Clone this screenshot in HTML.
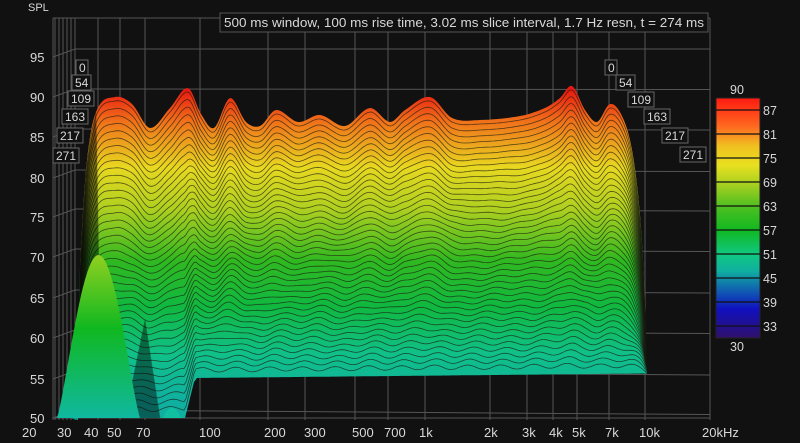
<!DOCTYPE html>
<html><head><meta charset="utf-8"><style>
html,body{margin:0;padding:0;background:#111112;width:800px;height:443px;overflow:hidden}
svg{display:block}
text{font-family:"Liberation Sans",sans-serif;fill:#d8d8d8}
</style></head><body>
<svg id="s" width="800" height="443" viewBox="0 0 800 443" xmlns="http://www.w3.org/2000/svg">
<defs>
<linearGradient id="g" gradientUnits="userSpaceOnUse" x1="0" y1="90" x2="0" y2="400">
<stop offset="0" stop-color="#e81a10"/>
<stop offset="0.1" stop-color="#f0701a"/>
<stop offset="0.25" stop-color="#e8d820"/>
<stop offset="0.38" stop-color="#b0d020"/>
<stop offset="0.55" stop-color="#30b820"/>
<stop offset="0.7" stop-color="#10b840"/>
<stop offset="0.85" stop-color="#10c088"/>
<stop offset="1" stop-color="#10b0a0"/>
</linearGradient>
<linearGradient id="hg" gradientUnits="userSpaceOnUse" x1="0" y1="255" x2="0" y2="418">
<stop offset="0" stop-color="#90d020"/><stop offset="0.45" stop-color="#10b820"/><stop offset="1" stop-color="#10b8a0"/>
</linearGradient>
<linearGradient id="cb" x1="0" y1="98" x2="0" y2="338" gradientUnits="userSpaceOnUse">
<stop offset="0" stop-color="#ff1a10"/><stop offset="0.12" stop-color="#ff6a20"/>
<stop offset="0.2" stop-color="#f0c020"/><stop offset="0.28" stop-color="#e8e020"/>
<stop offset="0.36" stop-color="#a8d020"/><stop offset="0.45" stop-color="#50c020"/>
<stop offset="0.55" stop-color="#10b820"/><stop offset="0.65" stop-color="#10c880"/>
<stop offset="0.72" stop-color="#10b0a0"/><stop offset="0.8" stop-color="#1060b0"/>
<stop offset="0.88" stop-color="#1010c0"/><stop offset="1" stop-color="#30106a"/>
</linearGradient>
<clipPath id="cp"><path id="cpp"/></clipPath>
</defs>
<g id="grid" stroke="#555" stroke-width="1" fill="none"></g>
<rect x="220" y="13" width="488" height="19" fill="#111112" stroke="#555"/>
<text x="224" y="27" font-size="12.5" textLength="480" lengthAdjust="spacingAndGlyphs">500 ms window, 100 ms rise time, 3.02 ms slice interval, 1.7 Hz resn, t = 274 ms</text>
<text x="28" y="11" font-size="11">SPL</text>
<g id="surf"></g>
<g id="labels" font-size="12"></g>
<rect x="716" y="98" width="44" height="240" fill="url(#cb)" stroke="#222"/>
<g stroke="#111" stroke-width="1.2" id="cbl"></g>
<g font-size="12.5" id="cbt"></g>
</svg>
<script>
(function(){
const NS="http://www.w3.org/2000/svg";
function el(t,a,p,txt){const e=document.createElementNS(NS,t);for(const k in a)e.setAttribute(k,a[k]);if(txt!==undefined)e.textContent=txt;(p||document.getElementById('s')).appendChild(e);return e;}
const grid=document.getElementById('grid');
const xs=[[28,"20"],[63,"30"],[90,"40"],[113,"50"],[142,"70"],[205,"100"],[270,"200"],[310,"300"],[358,"500"],[390,"700"],[425,"1k"],[490,"2k"],[528,"3k"],[555,"4k"],[578,"5k"],[611,"7k"],[645,"10k"],[708,"20kHz"]];
const gx=[53,98,120,145,200,268,305,355,388,425,490,527,553,577,609,645,710];
gx.forEach(x=>el('line',{x1:x,y1:18,x2:x,y2:420},grid));
[57,97,137,178,217,257,298,338,379,418].forEach((y,i)=>{el('line',{x1:53,y1:y,x2:75,y2:y-8},grid);el('line',{x1:75,y1:y-8,x2:710,y2:y-8+i*0.5},grid);});
el('line',{x1:53,y1:18,x2:710,y2:18},grid);
for(let i=0;i<6;i++)el('line',{x1:55+i*4,y1:18,x2:55+i*4,y2:420},grid);
el('line',{x1:53,y1:418,x2:710,y2:418},grid);
const L=document.getElementById('labels');
[[95,57],[90,97],[85,137],[80,178],[75,217],[70,257],[65,298],[60,338],[55,379],[50,418]].forEach(a=>el('text',{x:30,y:a[1]+5,"font-size":13},L,String(a[0])));
xs.forEach(a=>el('text',{x:a[0]-6,y:437,"font-size":13},L,a[1]));
function tag(x,y,t){el('rect',{x:x,y:y,width:t.length*7+5,height:15,fill:"#111",stroke:"#666"},L);el('text',{x:x+3,y:y+12},L,t);}
[[76,60,"0"],[72,75,"54"],[68,91,"109"],[62,109,"163"],[57,128,"217"],[53,148,"271"]].forEach(a=>tag(a[0],a[1],a[2]));
[[605,60,"0"],[616,75,"54"],[628,92,"109"],[644,109,"163"],[662,128,"217"],[680,147,"271"]].forEach(a=>tag(a[0],a[1],a[2]));
const pts=[[78,300],[86,170],[96,112],[115,97],[132,104],[150,128],[170,108],[188,88],[201,114],[214,128],[230,98],[246,122],[260,126],[276,110],[298,122],[320,115],[345,126],[370,108],[390,122],[405,110],[430,97],[452,118],[480,120],[520,116],[545,108],[560,98],[572,86],[585,110],[597,122],[610,104],[622,116],[632,150],[640,215],[645,300],[647,372]];
function topY(x){if(x<=pts[0][0])return 420;const n=pts.length;for(let i=1;i<n;i++){if(x<=pts[i][0]){const a=pts[i-1],b=pts[i];const p0=pts[Math.max(i-2,0)],p3=pts[Math.min(i+1,n-1)];const h=b[0]-a[0];const t=(x-a[0])/h;const m0=(b[1]-p0[1])/(b[0]-p0[0])*h,m1=(p3[1]-a[1])/(p3[0]-a[0])*h;const t2=t*t,t3=t2*t;return (2*t3-3*t2+1)*a[1]+(t3-2*t2+t)*m0+(-2*t3+3*t2)*b[1]+(t3-t2)*m1;}}return 372;}
function bot(x){return x<185?418:(x<195?418-(x-185)*4:378-(x-195)*0.01);}
let d="M56,418 L70,418 ";for(let x=78;x<=647;x+=2)d+="L"+x+","+topY(x).toFixed(1)+" ";
for(let x=647;x>=56;x-=3)d+="L"+x+","+bot(x).toFixed(1)+" ";d+="Z";
document.getElementById('cpp').setAttribute('d',d);
const S=document.getElementById('surf');
el('path',{d:d,fill:"url(#g)"},S);
const cg=el('g',{"clip-path":"url(#cp)",fill:"none",stroke:"#1a1a10","stroke-width":0.8,"stroke-opacity":0.7},S);
for(let k=0;k<42;k++){const f=k/42;let p="";for(let x=60;x<=650;x+=2){let ty=topY(x);if(ty>=400)ty=250;const b=bot(x);const w=Math.sin(x*0.07+k*0.25)*4*(1-f)+Math.sin(x*0.19+k*0.4)*1.5;const y=ty+(b-6-ty)*f+w*f*1.5+4;p+=(x==60?"M":"L")+x+","+y.toFixed(1)+" ";}el('path',{d:p},cg);}
el('path',{d:"M56,418 L78,300 L86,170 L96,112 L100,330 L120,418 Z",fill:"#000",opacity:0.5},cg);
el('path',{d:"M125,418 L145,320 L160,418 Z",fill:"#000",opacity:0.45},cg);
let h="M57,418 ";for(let x=57;x<=140;x+=2){const t=(x-57)/83;h+="L"+x+","+(418-163*Math.pow(Math.sin(Math.PI*t),1.2)).toFixed(1)+" ";}h+="L140,418 Z";
el('path',{d:h,fill:"url(#hg)"},S);
el('path',{d:"M163,418 Q172,398 181,418 Z",fill:"#10c0a0"},S);
const cbl=document.getElementById('cbl'),cbt=document.getElementById('cbt');
[87,81,75,69,63,57,51,45,39,33].forEach(v=>{const y=98+(90-v)/60*240;el('line',{x1:716,y1:y,x2:760,y2:y},cbl);el('text',{x:763,y:y+5},cbt,String(v));});
el('text',{x:730,y:94},cbt,"90");el('text',{x:730,y:351},cbt,"30");
})();
</script>
</body></html>
